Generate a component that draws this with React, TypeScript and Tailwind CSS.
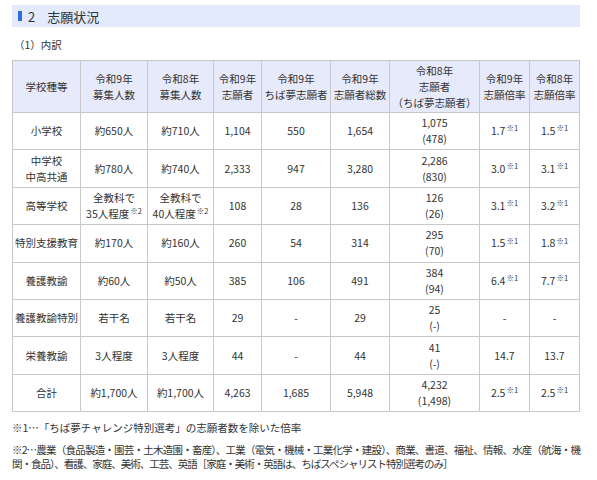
const font = { fontFamily: '"Noto Sans CJK JP", "Noto Sans", sans-serif' };

type Cell = React.ReactNode;

const Note = ({ n }: { n: number }) => <sup className="ml-[1px] text-[7.5px]">※{n}</sup>;

const widths = [68, 67, 66, 48, 69, 59, 90, 50, 50];

const head: Cell[] = [
  "学校種等",
  <>令和9年<br />募集人数</>,
  <>令和8年<br />募集人数</>,
  <>令和9年<br />志願者</>,
  <>令和9年<br />ちば夢志願者</>,
  <>令和9年<br />志願者総数</>,
  <>令和8年<br />志願者<br />（ちば夢志願者）</>,
  <>令和9年<br />志願倍率</>,
  <>令和8年<br />志願倍率</>,
];

const rows: Cell[][] = [
  ["小学校", "約650人", "約710人", "1,104", "550", "1,654", <>1,075<br />(478)</>, <>1.7<Note n={1} /></>, <>1.5<Note n={1} /></>],
  [<>中学校<br />中高共通</>, "約780人", "約740人", "2,333", "947", "3,280", <>2,286<br />(830)</>, <>3.0<Note n={1} /></>, <>3.1<Note n={1} /></>],
  ["高等学校", <>全教科で<br />35人程度<Note n={2} /></>, <>全教科で<br />40人程度<Note n={2} /></>, "108", "28", "136", <>126<br />(26)</>, <>3.1<Note n={1} /></>, <>3.2<Note n={1} /></>],
  ["特別支援教育", "約170人", "約160人", "260", "54", "314", <>295<br />(70)</>, <>1.5<Note n={1} /></>, <>1.8<Note n={1} /></>],
  ["養護教諭", "約60人", "約50人", "385", "106", "491", <>384<br />(94)</>, <>6.4<Note n={1} /></>, <>7.7<Note n={1} /></>],
  ["養護教諭特別", "若干名", "若干名", "29", "-", "29", <>25<br />(-)</>, "-", "-"],
  ["栄養教諭", "3人程度", "3人程度", "44", "-", "44", <>41<br />(-)</>, "14.7", "13.7"],
  ["合計", "約1,700人", "約1,700人", "4,263", "1,685", "5,948", <>4,232<br />(1,498)</>, <>2.5<Note n={1} /></>, <>2.5<Note n={1} /></>],
];

export default function App() {
  return (
    <div className="h-[480px] w-[597px] overflow-hidden bg-white text-[#333]" style={font}>
      <div className="ml-3 mr-[17px] pt-[5px]">
        <div className="flex h-[22px] items-center bg-[#e2eafb] pl-[6px]">
          <span className="h-[10px] w-[4px] bg-[#2f6fd6]" />
          <span className="ml-[6px] text-[13px] leading-none">2</span>
          <span className="ml-[12px] text-[13px] leading-none">志願状況</span>
        </div>

        <p className="mt-[11px] pl-[2px] text-[10.5px] leading-[14px]">（1）内訳</p>

        <table className="mt-[8px] w-[567px] table-fixed border-collapse text-center text-[10.5px] leading-[16px]">
          <colgroup>
            {widths.map((w, i) => (
              <col key={i} style={{ width: w }} />
            ))}
          </colgroup>
          <thead>
            <tr className="h-[52px]">
              {head.map((c, i) => (
                <th key={i} className="border border-[#c8c8c8] bg-[#e7eafa] p-0 font-normal">
                  {c}
                </th>
              ))}
            </tr>
          </thead>
          <tbody>
            {rows.map((r, ri) => (
              <tr key={ri} className="h-[37.4px]">
                {r.map((c, ci) => (
                  <td key={ci} className="whitespace-nowrap border border-[#c8c8c8] p-0">
                    {c}
                  </td>
                ))}
              </tr>
            ))}
          </tbody>
        </table>

        <div className="mt-[9px] text-[10.5px] leading-[14px]">
          <p>※1…「ちば夢チャレンジ特別選考」の志願者数を除いた倍率</p>
          <p className="mt-[8px] tracking-[-1px]">
            <span className="block whitespace-nowrap text-justify [text-align-last:justify]">
              ※2…農業（食品製造・園芸・土木造園・畜産）、工業（電気・機械・工業化学・建設）、商業、書道、福祉、情報、水産（航海・機
            </span>
            <span className="block">
              関・食品）、看護、家庭、美術、工芸、英語［家庭・美術・英語は、ちばスペシャリスト特別選考のみ］
            </span>
          </p>
        </div>
      </div>
    </div>
  );
}
